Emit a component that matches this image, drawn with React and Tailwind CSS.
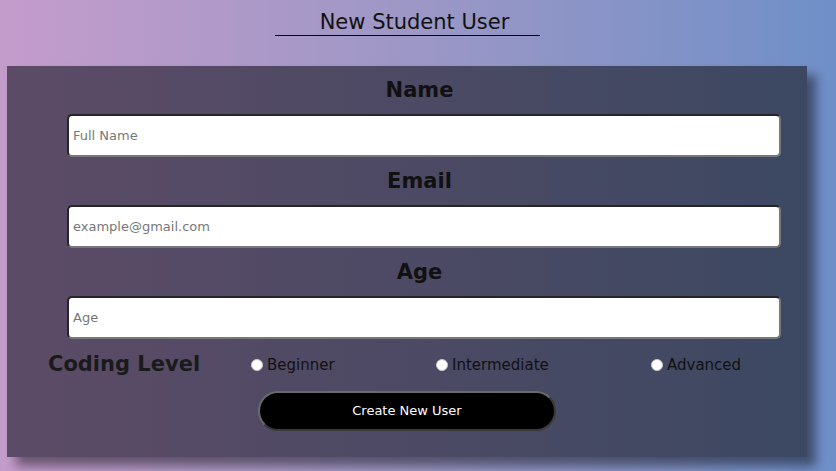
import React from "react";

const font = { fontFamily: '"DejaVu Sans", "Liberation Sans", sans-serif' };

function Field({ label, placeholder, mt }) {
  return (
    <>
      <div className={`${mt} h-[36px] leading-[36px] text-center text-[21px] font-bold text-[#111] pl-[25px]`}>
        {label}
      </div>
      <input
        placeholder={placeholder}
        className="mt-[6px] ml-[60px] w-[714px] h-[43px] bg-white rounded-[5px] border-2 border-t-[#262626] border-l-[#262626] border-b-[#787878] border-r-[#787878] pl-[4px] text-[13px] text-[#222] placeholder:text-[#777] outline-none"
        style={font}
      />
    </>
  );
}

function Radio({ label, w }) {
  return (
    <label className={`flex items-center ${w}`}>
      <span className="w-[12px] h-[12px] rounded-full bg-white border border-[#c8c8c8] mr-[4px]" />
      <span className="text-[15px] text-[#111]">{label}</span>
    </label>
  );
}

export default function App() {
  return (
    <div
      className="w-full min-h-screen h-[471px] bg-gradient-to-r from-[#c49ccc] via-[#9c97c6] to-[#6f8fc8] overflow-hidden"
      style={font}
    >
      <div className="w-[800px] ml-[7px]">
        <div className="flex justify-center">
          <h1 className="w-[265px] text-center text-[21px] leading-[26px] pt-[9px] pb-0 pl-[15px] text-[#111] border-b border-black font-normal">
            New Student User
          </h1>
        </div>
        <div className="mt-[30px] h-[391px] bg-gradient-to-r from-[#5c4b66] to-[#3c4862] shadow-[9px_9px_10px_rgba(0,0,0,0.45)] pt-[6px] flex flex-col">
          <Field label="Name" placeholder="Full Name" mt="mt-0" />
          <Field label="Email" placeholder="example@gmail.com" mt="mt-[6px]" />
          <Field label="Age" placeholder="Age" mt="mt-[6px]" />
          <div className="mt-[8px] h-[36px] flex items-center">
            <div className="ml-[41px] w-[203px] text-[21px] font-bold text-[#1a1a1a]">Coding Level</div>
            <Radio label="Beginner" w="w-[185px]" />
            <Radio label="Intermediate" w="w-[215px]" />
            <Radio label="Advanced" w="w-[120px]" />
          </div>
          <div className="mt-[8px] ml-[251px]">
            <button className="w-[298px] h-[40px] rounded-full bg-black text-white text-[13px] font-medium border-2 border-t-[#6a6a6a] border-l-[#6a6a6a] border-b-[#3a3a3a] border-r-[#3a3a3a]">
              Create New User
            </button>
          </div>
        </div>
      </div>
    </div>
  );
}
